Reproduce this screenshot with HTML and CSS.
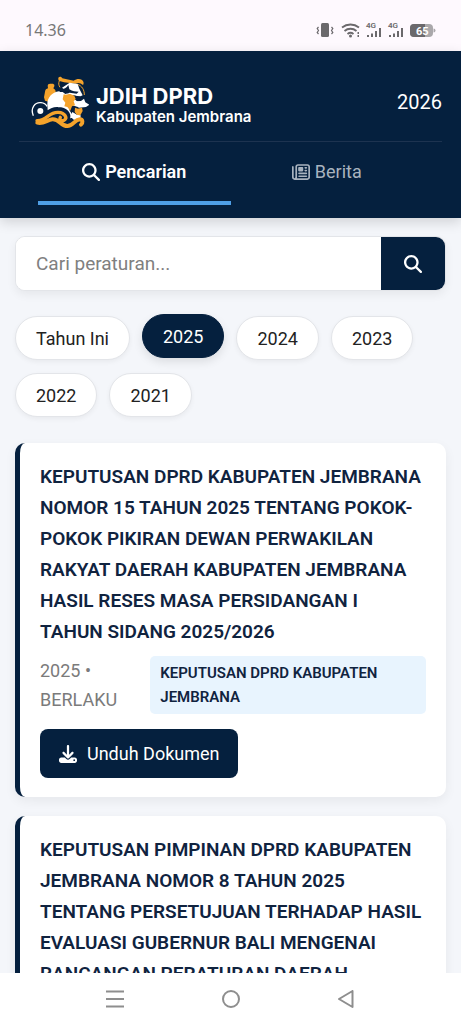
FILE: index.html
```html
<!DOCTYPE html>
<html lang="id">
<head>
    <meta charset="UTF-8">
    <meta name="viewport" content="width=device-width, initial-scale=1.0">
    <title>JDIH DPRD Kabupaten Jembrana</title>
    <link rel="stylesheet" href="styles.css">
</head>
<body>
    <div class="status-bar">
        <span class="clock">14.36</span>
        <svg class="status-icons" viewBox="0 0 120 20" aria-hidden="true">
            <!-- vibrate -->
            <rect x="5" y="3" width="8" height="14" rx="1.5"/>
            <path class="line" d="M2.500 7l-1.300 1.500 1.300 2-1.300 2 1.300 1.500M15.500 7l1.300 1.500-1.300 2 1.300 2-1.300 1.500"/>
            <!-- wifi -->
            <path class="line wifi" d="M26 7.500c5-4 12-4 17 0M28.500 11c3.500-3 8.500-3 12 0M31.500 14c2-1.600 4-1.600 6 0"/>
            <circle cx="34.500" cy="16" r="1.500"/>
            <path d="M41.500 12h1.500v2h-1.500zM41.500 15h1.500v2h-1.500z"/>
            <!-- signal -->
            <text x="50" y="8" class="net">4G</text>
            <path d="M51 15h2v2h-2zM55 13.500h2v3.500h-2zM59 11h2v6h-2zM63 8h2v9h-2z"/>
            <text x="72" y="8" class="net">4G</text>
            <path d="M73 15h2v2h-2zM77 13.500h2v3.500h-2zM81 11h2v6h-2zM85 8h2v9h-2z"/>
            <!-- battery -->
            <rect class="battery-rest" x="94" y="4" width="23" height="13" rx="4"/>
            <path class="battery-rest" d="M117.500 8.500q2 0 2 2t-2 2z"/>
            <path d="M98 4h11v13h-11a4 4 0 0 1-4-4v-5a4 4 0 0 1 4-4z"/>
            <text x="100" y="14.500" class="percent">65</text>
        </svg>
    </div>

    <header class="header">
        <div class="header-top">
            <div class="brand">
                <svg class="logo" viewBox="0 0 174 162" aria-hidden="true">
                    <!-- bag -->
                    <path fill="#f5a32b" d="M50 32q0-6 7-6h9q6 2 4 8l-3 6c6 3 8 8 7 15l-9 12-12 13-11-3-3-10 3-17c1-6 4-9 9-10z"/>
                    <!-- body -->
                    <path fill="#fff" d="M49 88c0-20 14-36 35-39l22 3 34 28-4 46-30 6-22-22-34-4z"/>
                    <!-- hat -->
                    <path fill="none" stroke="#f5a32b" stroke-width="3" d="M85 17c-3 8-2 14 2 20M140 28c13 5 20 16 20 32"/>
                    <path fill="#f5a32b" d="M82 8c4-4 9-3 12 2l34 7c7-5 17-7 24-3 7 4 7 12 4 16-7-6-14-8-22-4-15-1-31-3-46-7-5-1-7-5-6-11z"/>
                    <!-- face -->
                    <path fill="#fff" d="M93 38l23-15 24 4 5 14 10 20-11 5-14-5-15-1-10-13z"/>
                    <path fill="#071f3d" d="M87 43c10 1 19-3 25-13l3 13c9 6 19 7 28 7l-6 6-21-3-13 4-8-6-9 0z"/>
                    <path fill="#071f3d" d="M132 62l15 2 12 9-11 5-17-5zM122 91l18 4 17-7-3 7 6 12-7 20-23 2-15-24z"/>
                    <path fill="#fff" d="M132 79l18-1 9-7 4 11 12 7-10 7-21 2-14-8z"/>
                    <path fill="#fff" d="M124 111l14 8 11 2-1 14-20-1-9-9z"/>
                    <!-- beards -->
                    <path fill="#f5a32b" d="M98 58c8 3 14-1 20-1l12 5 4 10-6 7 4 12-9 3-5 13-9-11-9-2 3-11-8-10z"/>
                    <path fill="#f5a32b" d="M132 98l9 3 12-3 2 10-7 13-10-1-7-9z"/>
                    <!-- wheel -->
                    <path fill="none" stroke="#fff" stroke-width="4" d="M7 122C-3 99 12 81 30 83c9 1 15 5 18 11"/>
                    <circle cx="28" cy="108" r="9" fill="#fff"/>
                    <!-- waves -->
                    <path fill="none" stroke="#071f3d" stroke-width="20" d="M22 132c28-2 30-28 58-26 24 1 31 12 27 25"/>
                    <path fill="none" stroke="#f5a32b" stroke-width="10" stroke-linecap="round" d="M18 137c31 1 34-27 64-25 21 1 28 17 17 24-7 4-15-2-11-9"/>
                    <path fill="none" stroke="#f5a32b" stroke-width="12" stroke-linecap="round" d="M19 143c18 5 29-8 45-10 21-2 25 20 45 20 18 0 21-19 38-20 9 0 9 12 3 16"/>
                </svg>
                <div class="brand-text">
                    <span class="brand-name">JDIH DPRD</span>
                    <span class="brand-region">Kabupaten Jembrana</span>
                </div>
            </div>
            <span class="year">2026</span>
        </div>
        <nav class="tabs">
            <a href="#pencarian" class="tab active">
                <svg class="icon" viewBox="0 0 512 512" aria-hidden="true"><path d="M416 208c0 45.900-14.900 88.300-40 122.700L502.600 457.400c12.500 12.500 12.500 32.800 0 45.300s-32.800 12.500-45.300 0L330.700 376c-34.400 25.200-76.800 40-122.700 40C93.100 416 0 322.900 0 208S93.100 0 208 0S416 93.100 416 208zM208 352a144 144 0 1 0 0-288 144 144 0 1 0 0 288z"/></svg>
                Pencarian
            </a>
            <a href="#berita" class="tab">
                <svg class="icon" viewBox="0 0 512 512" aria-hidden="true"><path d="M168 80c-13.300 0-24 10.700-24 24V408c0 8.400-1.400 16.500-4.100 24H440c13.300 0 24-10.700 24-24V104c0-13.300-10.700-24-24-24H168zM72 480c-39.800 0-72-32.200-72-72V112C0 98.700 10.700 88 24 88s24 10.700 24 24V408c0 13.300 10.700 24 24 24s24-10.700 24-24V104c0-39.800 32.200-72 72-72H440c39.800 0 72 32.200 72 72V408c0 39.800-32.200 72-72 72H72zM176 136c0-13.300 10.700-24 24-24h96c13.300 0 24 10.700 24 24v80c0 13.300-10.700 24-24 24H200c-13.300 0-24-10.700-24-24V136zm200-24h32c13.300 0 24 10.700 24 24s-10.700 24-24 24H376c-13.300 0-24-10.700-24-24s10.700-24 24-24zm0 80h32c13.300 0 24 10.700 24 24s-10.700 24-24 24H376c-13.300 0-24-10.700-24-24s10.700-24 24-24zM200 272H408c13.300 0 24 10.700 24 24s-10.700 24-24 24H200c-13.300 0-24-10.700-24-24s10.700-24 24-24zm0 80H408c13.300 0 24 10.700 24 24s-10.700 24-24 24H200c-13.300 0-24-10.700-24-24s10.700-24 24-24z"/></svg>
                Berita
            </a>
        </nav>
    </header>

    <main class="content">
        <form class="search">
            <input type="text" id="keyword" placeholder="Cari peraturan..." aria-label="Cari peraturan">
            <button type="submit" aria-label="Cari">
                <svg class="icon" viewBox="0 0 512 512" aria-hidden="true"><path d="M416 208c0 45.900-14.900 88.300-40 122.700L502.600 457.400c12.500 12.500 12.500 32.800 0 45.300s-32.800 12.500-45.300 0L330.700 376c-34.400 25.200-76.800 40-122.700 40C93.100 416 0 322.900 0 208S93.100 0 208 0S416 93.100 416 208zM208 352a144 144 0 1 0 0-288 144 144 0 1 0 0 288z"/></svg>
            </button>
        </form>

        <div class="filters">
            <button type="button" class="chip">Tahun Ini</button>
            <button type="button" class="chip active">2025</button>
            <button type="button" class="chip">2024</button>
            <button type="button" class="chip">2023</button>
            <button type="button" class="chip">2022</button>
            <button type="button" class="chip">2021</button>
        </div>

        <div class="results">
            <article class="card">
                <h2>KEPUTUSAN DPRD KABUPATEN JEMBRANA NOMOR 15 TAHUN 2025 TENTANG POKOK-POKOK PIKIRAN DEWAN PERWAKILAN RAKYAT DAERAH KABUPATEN JEMBRANA HASIL RESES MASA PERSIDANGAN I TAHUN SIDANG 2025/2026</h2>
                <div class="meta">
                    <span class="status">2025 • BERLAKU</span>
                    <span class="tag">KEPUTUSAN DPRD KABUPATEN JEMBRANA</span>
                </div>
                <button type="button" class="download">
                    <svg class="icon" viewBox="0 0 512 512" aria-hidden="true"><path d="M288 32c0-17.700-14.300-32-32-32s-32 14.300-32 32V274.700l-73.400-73.400c-12.500-12.500-32.800-12.500-45.300 0s-12.500 32.800 0 45.300l128 128c12.500 12.500 32.800 12.500 45.300 0l128-128c12.500-12.500 12.500-32.800 0-45.300s-32.800-12.500-45.300 0L288 274.700V32zM64 352c-35.300 0-64 28.700-64 64v32c0 35.300 28.700 64 64 64H448c35.300 0 64-28.700 64-64V416c0-35.300-28.700-64-64-64H346.500l-45.300 45.300c-25 25-65.500 25-90.500 0L165.500 352H64zm368 56a24 24 0 1 1 0 48 24 24 0 1 1 0-48z"/></svg>
                    Unduh Dokumen
                </button>
            </article>

            <article class="card">
                <h2>KEPUTUSAN PIMPINAN DPRD KABUPATEN JEMBRANA NOMOR 8 TAHUN 2025 TENTANG PERSETUJUAN TERHADAP HASIL EVALUASI GUBERNUR BALI MENGENAI RANCANGAN PERATURAN DAERAH</h2>
            </article>
        </div>
    </main>

    <div class="system-nav">
        <button type="button" aria-label="Menu"><svg viewBox="0 0 18 18"><path d="M0 1.500h18M0 9h18M0 16.500h18"/></svg></button>
        <button type="button" aria-label="Beranda"><svg viewBox="0 0 18 18"><circle cx="9" cy="9" r="8"/></svg></button>
        <button type="button" aria-label="Kembali"><svg viewBox="0 0 18 18"><path d="M15.500 1v16L2 9z"/></svg></button>
    </div>
</body>
</html>
```

FILE: styles.css
```css
* {
    box-sizing: border-box;
}
body {
    font-family: Roboto, sans-serif;
    font-size: 18px;
    margin: 0;
    height: 100vh;
    display: flex;
    flex-direction: column;
    background: #f4f6fa;
    color: #222;
}
button, input {
    font-family: inherit;
    font-size: 18px;
    border: none;
}
button {
    cursor: pointer;
}
.icon {
    width: 18px;
    height: 18px;
    fill: currentColor;
}

/* Status bar */
.status-bar {
    flex: none;
    height: 51px;
    padding: 8px 25px 0;
    display: flex;
    justify-content: space-between;
    align-items: center;
    background: #fef9fe;
    color: #777;
}
.clock {
    font-family: "Noto Sans", sans-serif;
    font-size: 16px;
}
.status-icons {
    width: 120px;
    height: 20px;
    fill: #6b696c;
}
.status-icons .line {
    fill: none;
    stroke: #6b696c;
    stroke-width: 1.2;
}
.status-icons .wifi {
    stroke-width: 1.8;
}
.net {
    font-size: 8px;
    font-weight: 600;
}
.battery-rest {
    fill: #aaa8ab;
}
.percent {
    font-size: 11px;
    font-weight: 700;
    fill: #fff;
}

/* Header */
.header {
    flex: none;
    padding: 0 19px 13px;
    background: #05203e;
    color: #fff;
    box-shadow: 0 4px 12px rgba(0, 0, 0, 0.15);
    z-index: 1;
}
.header-top {
    height: 91px;
    padding-top: 12px;
    display: flex;
    justify-content: space-between;
    align-items: center;
    border-bottom: 1px solid #1d3350;
}
.brand {
    display: flex;
    align-items: center;
    gap: 7px;
    padding-left: 12px;
}
.logo {
    width: 58px;
    height: 54px;
}
.brand-text {
    display: flex;
    flex-direction: column;
    padding-top: 8px;
    font-family: Inter, sans-serif;
}
.brand-name {
    font-size: 22px;
    font-weight: 700;
    line-height: 22px;
}
.brand-region {
    font-size: 15px;
    font-weight: 600;
    line-height: 20px;
}
.year {
    font-size: 20px;
}
.tabs {
    display: flex;
    padding: 0 19px;
}
.tab {
    flex: 1;
    height: 63px;
    display: flex;
    justify-content: center;
    align-items: center;
    gap: 5px;
    border-bottom: 4px solid transparent;
    color: #a9b3bf;
    text-decoration: none;
}
.tab.active {
    color: #fff;
    font-weight: 600;
    border-bottom-color: #4f9fe6;
}

/* Content */
.content {
    flex: 1;
    min-height: 0;
    overflow: hidden;
    padding: 18px 15px 0;
}
.search {
    display: flex;
    height: 55px;
    border: 1px solid #e3e5e9;
    border-radius: 10px;
    overflow: hidden;
    background: #fff;
    box-shadow: 0 4px 10px rgba(0, 0, 0, 0.06);
}
.search input {
    flex: 1;
    min-width: 0;
    padding: 0 20px;
    font-size: 19px;
    background: #fff;
    outline: none;
}
.search input::placeholder {
    color: #808080;
}
.search button {
    width: 64px;
    background: #05203e;
    color: #fff;
    display: flex;
    justify-content: center;
    align-items: center;
}
.filters {
    display: flex;
    flex-wrap: wrap;
    gap: 13px 12px;
    margin: 25px 0 26px;
}
.chip {
    height: 44px;
    padding: 0 20px;
    border: 1px solid #e3e5e9;
    border-radius: 22px;
    background: #fff;
    color: #222;
    box-shadow: 0 2px 5px rgba(0, 0, 0, 0.05);
}
.chip.active {
    background: #05203e;
    border-color: #05203e;
    color: #fff;
    transform: translateY(-2px);
    box-shadow: 0 4px 10px rgba(0, 0, 0, 0.1);
}

/* Cards */
.results {
    display: flex;
    flex-direction: column;
    gap: 19px;
}
.card {
    padding: 18px 20px 19px;
    border-left: 5px solid #05203e;
    border-radius: 10px;
    background: #fff;
    box-shadow: 0 4px 12px rgba(0, 0, 0, 0.06);
}
.card h2 {
    margin: 0 0 9px;
    padding-right: 3px;
    font-size: 19px;
    font-weight: 600;
    line-height: 31px;
    color: #10233f;
}
.meta {
    display: grid;
    grid-template-columns: 2fr 5fr;
    align-items: center;
    margin-bottom: 15px;
}
.status {
    padding-right: 20px;
    line-height: 29px;
    color: #7b7b7b;
}
.tag {
    padding: 5px 10px;
    border-radius: 5px;
    background: #e8f4fe;
    color: #10233f;
    font-size: 15px;
    font-weight: 600;
    line-height: 24px;
}
.download {
    display: flex;
    align-items: center;
    gap: 10px;
    height: 49px;
    padding: 0 19px;
    border-radius: 8px;
    background: #05203e;
    color: #fff;
}

/* System navigation */
.system-nav {
    flex: none;
    height: 51px;
    padding: 0 23%;
    display: flex;
    justify-content: space-between;
    align-items: center;
    background: #fff;
    z-index: 1;
}
.system-nav button {
    padding: 0;
    background: none;
}
.system-nav svg {
    display: block;
    width: 18px;
    height: 18px;
    fill: none;
    stroke: #8e8e8e;
    stroke-width: 2;
    stroke-linejoin: round;
}
```
